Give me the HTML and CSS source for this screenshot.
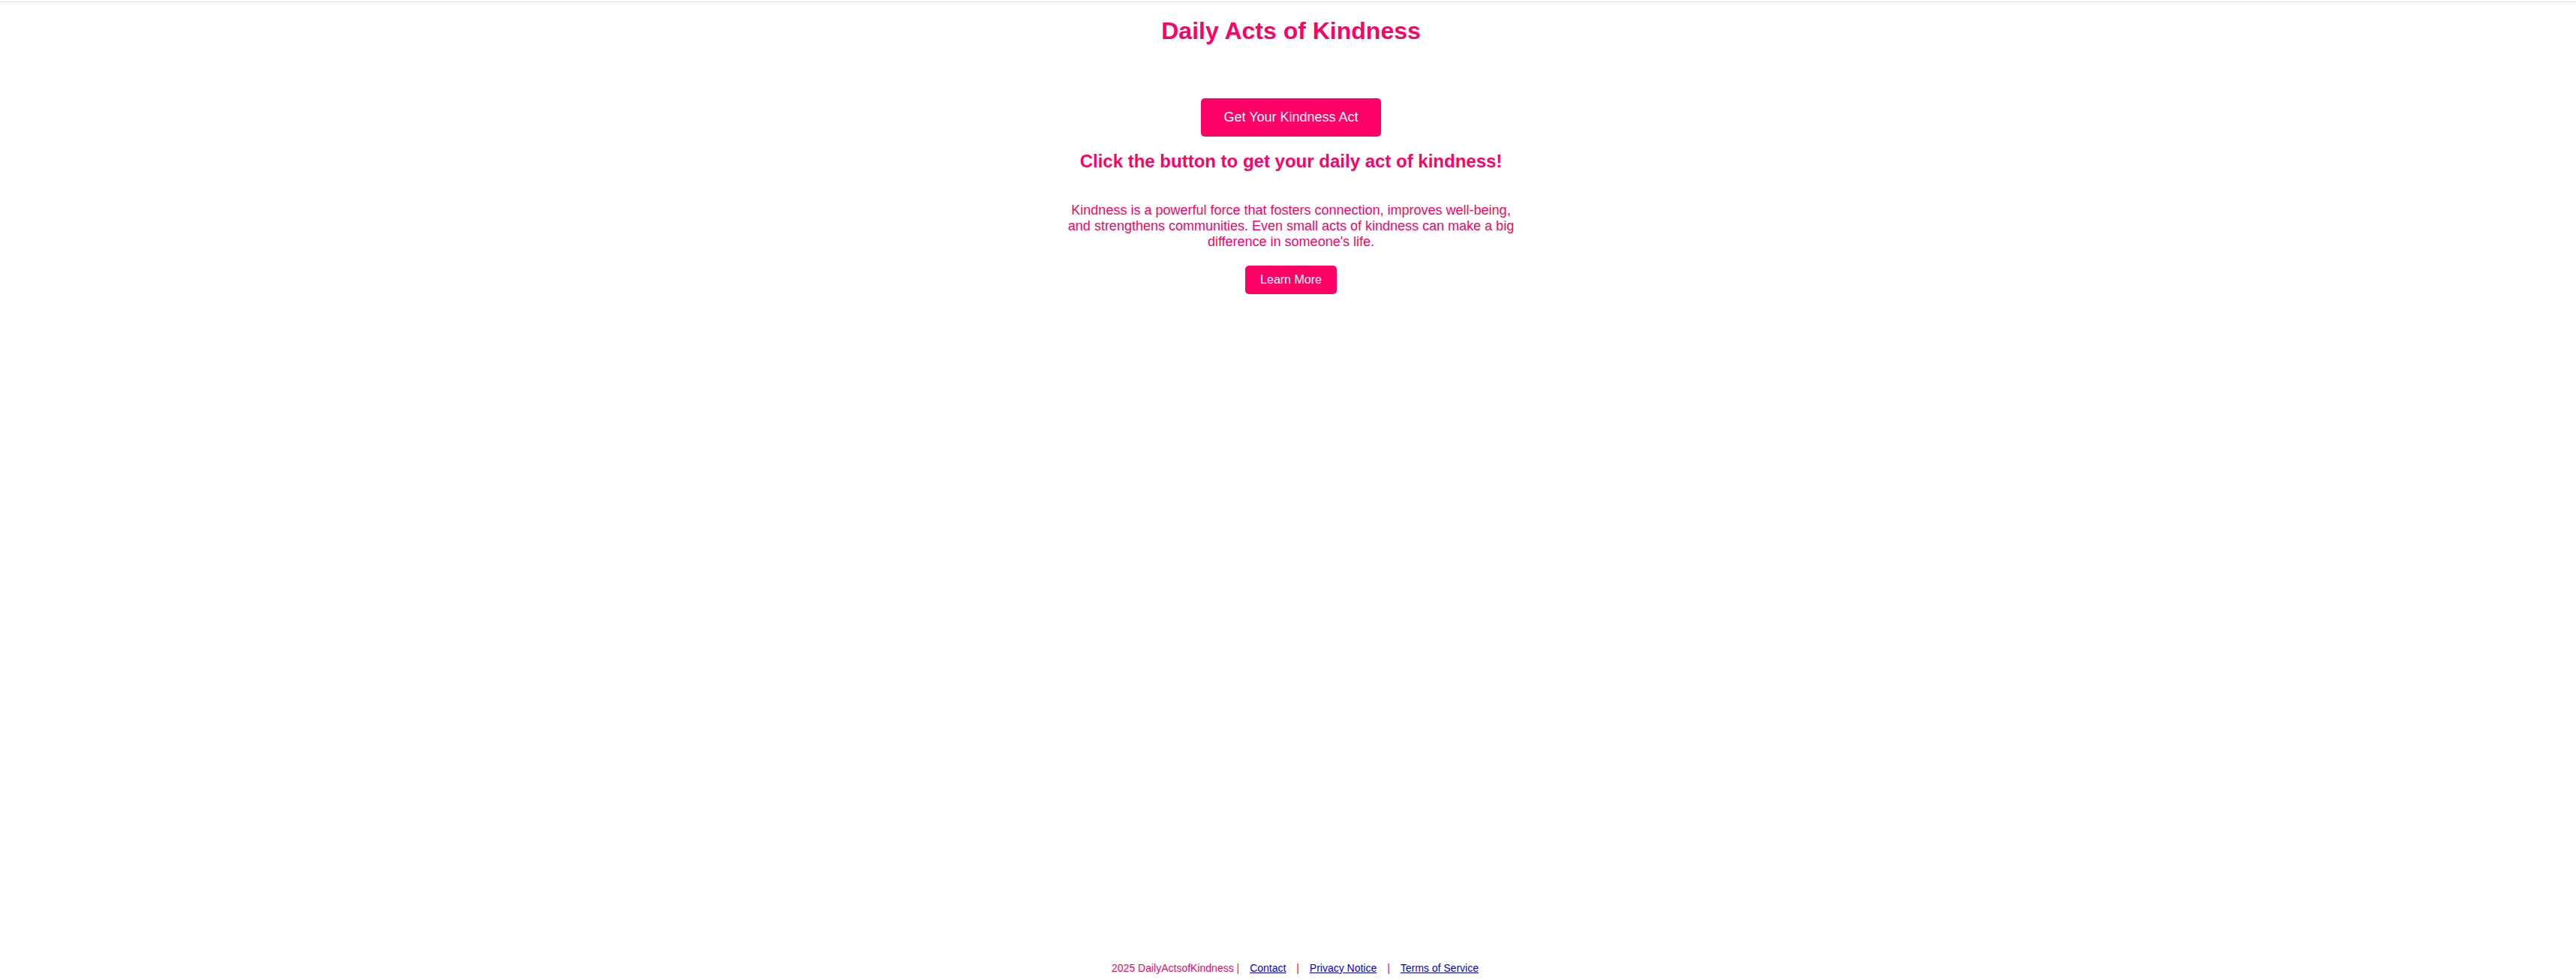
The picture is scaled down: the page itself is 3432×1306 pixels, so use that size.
FILE: index.html
```html
<!DOCTYPE html>
<html lang="en">
<head>
<meta charset="utf-8">
<title>Daily Acts of Kindness</title>
<link rel="stylesheet" href="styles.css">
</head>
<body>
<div class="topbar"></div>
<main class="main">
  <h1 class="title">Daily Acts of Kindness</h1>
  <button class="btn btn-primary" type="button">Get Your Kindness Act</button>
  <h2 class="prompt">Click the button to get your daily act of kindness!</h2>
  <p class="intro">Kindness is a powerful force that fosters connection, improves well-being, and strengthens communities. Even small acts of kindness can make a big difference in someone's life.</p>
  <button class="btn btn-small" type="button">Learn More</button>
</main>
<footer class="footer">2025 DailyActsofKindness | <a class="footer-link" href="#">Contact</a> | <a class="footer-link" href="#">Privacy Notice</a> | <a class="footer-link" href="#">Terms of Service</a></footer>
</body>
</html>
```

FILE: styles.css
```css
html, body {
  margin: 0;
  padding: 0;
}
body {
  min-height: 100vh;
  display: flex;
  flex-direction: column;
  background: #ffffff;
  color: #ff0066;
  font-family: "Liberation Sans", Arial, sans-serif;
  text-align: center;
}
.topbar {
  height: 2px;
  border-bottom: 1px solid #e2e2e2;
}
.main {
  display: flex;
  flex-direction: column;
  align-items: center;
  padding-left: 8px;
}
.title {
  font-size: 32px;
  font-weight: bold;
  margin: 20px 0 71px;
}
.btn {
  font-family: "Liberation Sans", Arial, sans-serif;
  background: #ff0066;
  color: #ffffff;
  border: none;
  border-radius: 5px;
  cursor: pointer;
}
.btn-primary {
  font-size: 18px;
  padding: 15px 30px;
}
.prompt {
  font-size: 24px;
  font-weight: bold;
  margin: 19px 0 0;
}
.intro {
  max-width: 600px;
  font-size: 18px;
  margin: 41px 0 0;
}
.btn-small {
  font-size: 16px;
  padding: 10px 20px;
  margin-top: 21px;
}
.footer {
  margin-top: auto;
  padding: 8px 0 8px 29px;
  font-size: 14px;
}
.footer-link {
  color: #0000ee;
  margin: 0 10px;
}
```
